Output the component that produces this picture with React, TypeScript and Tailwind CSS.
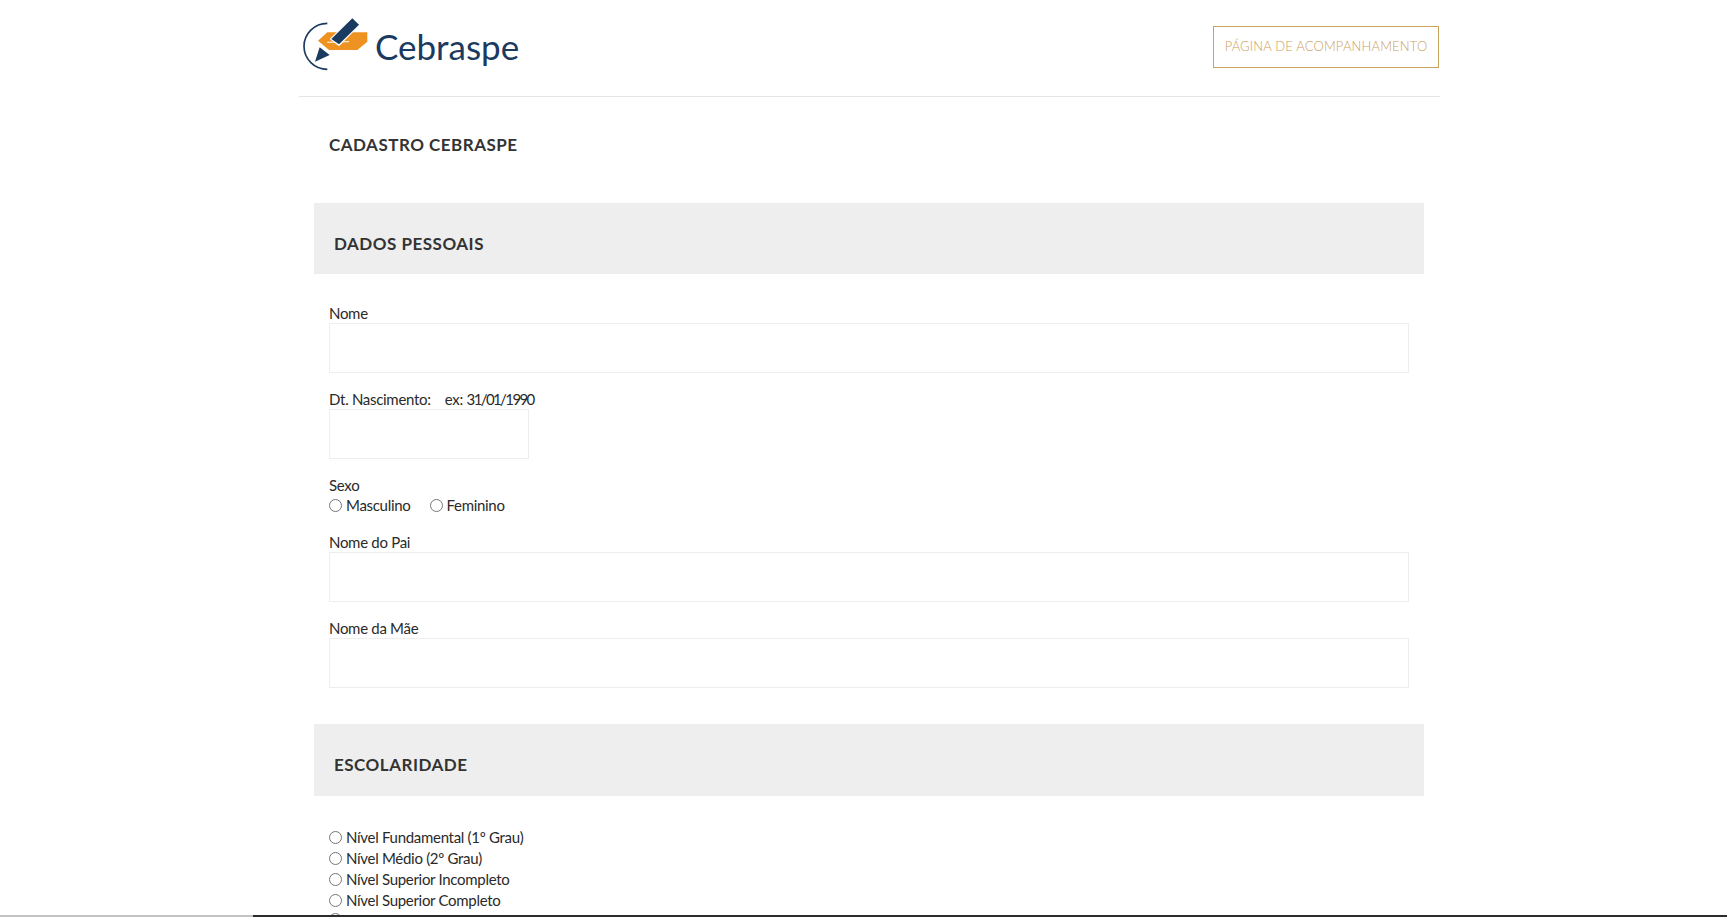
const labelFont = "font-['Lato','Liberation_Sans',sans-serif]";

function Logo() {
  return (
    <div className="flex items-center">
      <svg width="100" height="65" viewBox="0 0 300 195" className="shrink-0">
        <path d="M85 25 A70 69 0 0 0 85 163" fill="none" stroke="#1b3a60" strokeWidth="5" />
        <path d="M57 77 L85 52 L205 52 L205 80 L175 105 L90 105 Z" fill="#ee9321" />
        <path d="M85 82 L150 80" stroke="#fff" strokeWidth="3" fill="none" />
        <path d="M92 72 L160 6 L184 29 L120 94 Z" fill="#fff" />
        <path d="M97 72 L160 10 L180 29 L120 88 Z" fill="#1b3a60" />
        <path d="M62 97 L92 120 L48 140 Z" fill="#1b3a60" />
      </svg>
      <span className="ml-[-24px] mt-[-1px] text-[35px] leading-none text-[#1b3a60] font-['Lato',sans-serif]">Cebraspe</span>
    </div>
  );
}

function SectionBar({ title, className }: { title: string; className: string }) {
  return (
    <div className={`ml-[15px] mr-[16px] flex items-center bg-[#eeeeee] pl-[20px] pt-[10px] ${className}`}>
      <h2 className="text-[17px] font-bold tracking-[0.5px] text-[#333333]">{title}</h2>
    </div>
  );
}

function TextField({ label, hint, width = 'w-full' }: { label: string; hint?: string; width?: string }) {
  return (
    <div className="mb-4">
      <label className="block h-5 text-[15px] leading-5 tracking-[-0.3px] whitespace-pre text-[#2a2a2a]">
        {label}
        {hint && <span className="tracking-[-1.6px]">{hint}</span>}
      </label>
      <input type="text" className={`block h-[50px] ${width} border border-[#eeeeee] bg-white`} />
    </div>
  );
}

function RadioOption({ label, name }: { label: string; name: string }) {
  return (
    <label className="flex h-[21px] items-center text-[15px] tracking-[-0.3px] text-[#2a2a2a]">
      <input type="radio" name={name} className="mr-[4px] ml-0 h-[13px] w-[13px]" />
      {label}
    </label>
  );
}

const escolaridade = [
  'Nível Fundamental (1º Grau)',
  'Nível Médio (2º Grau)',
  'Nível Superior Incompleto',
  'Nível Superior Completo',
];

export default function App() {
  return (
    <div className={`flex h-[917px] flex-col overflow-hidden bg-white ${labelFont}`}>
      <div className="flex-1 overflow-hidden">
        <div className="ml-[299px] w-[1141px]">
          <header className="flex h-[97px] items-center justify-between border-b border-[#e5e5e5] pb-[2px]">
            <Logo />
            <a className="mr-[1px] flex h-[42px] w-[226px] items-center justify-center border border-[#c9a45c] text-[13px] font-light tracking-[0.15px] text-[#cba060]">
              PÁGINA DE ACOMPANHAMENTO
            </a>
          </header>

          <div className="flex h-[106px] items-start pl-[30px] pt-[35px]">
            <h1 className="text-[17px] font-bold tracking-[0.5px] text-[#333333]">CADASTRO CEBRASPE</h1>
          </div>

          <SectionBar title="DADOS PESSOAIS" className="h-[71px]" />

          <form className="w-[1110px] pl-[30px] pt-[29px]">
            <TextField label="Nome" />
            <TextField label="Dt. Nascimento:    ex: " hint="31/01/1990" width="w-[200px]" />
            <div className="mb-4">
              <div className="h-5 text-[15px] leading-5 tracking-[-0.3px] text-[#2a2a2a]">Sexo</div>
              <div className="flex gap-[19px]">
                <RadioOption label="Masculino" name="sexo" />
                <RadioOption label="Feminino" name="sexo" />
              </div>
            </div>
            <TextField label="Nome do Pai" />
            <TextField label="Nome da Mãe" />
          </form>

          <div className="h-[20px]" />
          <SectionBar title="ESCOLARIDADE" className="h-[72px]" />

          <div className="pl-[30px] pt-[31px]">
            {escolaridade.map((item) => (
              <RadioOption key={item} label={item} name="escolaridade" />
            ))}
            <input type="radio" name="escolaridade" className="mt-[2px] ml-0 block h-[13px] w-[13px]" />
          </div>
        </div>
      </div>
      <div className="flex h-[2px] shrink-0">
        <div className="w-[253px] bg-[#c4c4c4]" />
        <div className="flex-1 bg-[#2b2b2b]" />
      </div>
    </div>
  );
}
